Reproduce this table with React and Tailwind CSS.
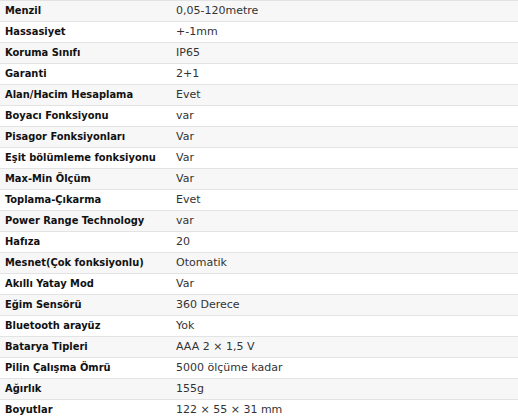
import React from 'react';

const rows = [
  ['Menzil', '0,05-120metre'],
  ['Hassasiyet', '+-1mm'],
  ['Koruma Sınıfı', 'IP65'],
  ['Garanti', '2+1'],
  ['Alan/Hacim Hesaplama', 'Evet'],
  ['Boyacı Fonksiyonu', 'var'],
  ['Pisagor Fonksiyonları', 'Var'],
  ['Eşit bölümleme fonksiyonu', 'Var'],
  ['Max-Min Ölçüm', 'Var'],
  ['Toplama-Çıkarma', 'Evet'],
  ['Power Range Technology', 'var'],
  ['Hafıza', '20'],
  ['Mesnet(Çok fonksiyonlu)', 'Otomatik'],
  ['Akıllı Yatay Mod', 'Var'],
  ['Eğim Sensörü', '360 Derece'],
  ['Bluetooth arayüz', 'Yok'],
  ['Batarya Tipleri', 'AAA 2 × 1,5 V'],
  ['Pilin Çalışma Ömrü', '5000 ölçüme kadar'],
  ['Ağırlık', '155g'],
  ['Boyutlar', '122 × 55 × 31 mm'],
];

export default function App() {
  return (
    <div className="w-[518px] h-[420px] overflow-hidden bg-white font-['DejaVu_Sans',sans-serif] text-[11px] text-[#222]">
      <div className="border-t border-[#e3e3e3]">
        {rows.map(([label, value], i) => (
          <div
            key={label}
            className={`flex h-[21px] items-center border-b border-[#e3e3e3] ${i % 2 === 0 ? 'bg-[#f7f7f7]' : 'bg-white'}`}
          >
            <div className="w-[176px] shrink-0 pl-[5px] font-['DejaVu_Sans_Condensed','DejaVu_Sans',sans-serif] font-bold text-[#111]">{label}</div>
            <div className="text-[#333]">{value}</div>
          </div>
        ))}
      </div>
    </div>
  );
}
